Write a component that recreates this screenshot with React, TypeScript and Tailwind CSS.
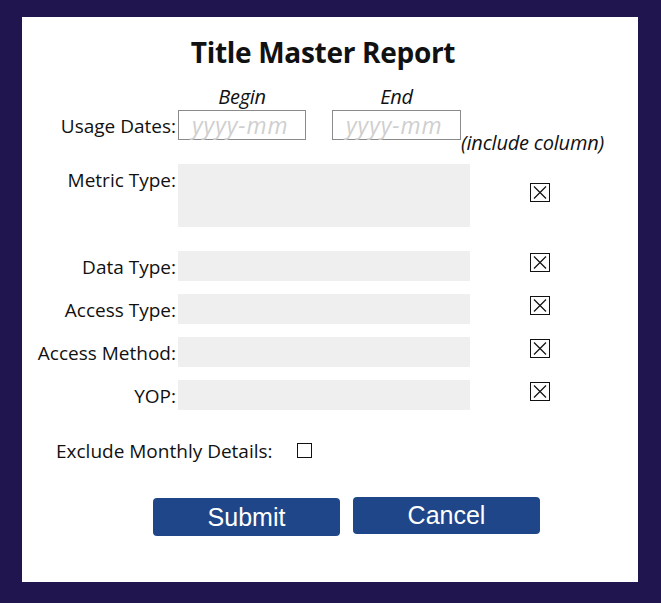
import { ReactNode } from "react";

const font = { fontFamily: '"Open Sans", "Noto Sans", sans-serif' };

function XBox() {
  return (
    <svg width="20" height="19" viewBox="0 0 20 19" className="block">
      <rect x="0.5" y="0.5" width="19" height="18" fill="white" stroke="#111" strokeWidth="1" />
      <path d="M4 3.5 L16 15.5 M16 3.5 L4 15.5" stroke="#111" strokeWidth="1.2" />
    </svg>
  );
}

function Row({ label, tall, children }: { label: string; tall?: boolean; children?: ReactNode }) {
  return (
    <div className={`flex ${tall ? "items-start" : "items-center"}`}>
      <div className={`w-[154px] text-right text-[19px] leading-[26px] text-[#111] ${tall ? "mt-[3px]" : "mt-[1px]"}`}>
        {label}
      </div>
      <div className={`ml-[2px] w-[292px] bg-[#efefef] ${tall ? "h-[63px]" : "h-[30px]"}`} />
      <div className={`ml-[60px] ${tall ? "mt-[19px]" : "-mt-[7px]"}`}>{children ?? <XBox />}</div>
    </div>
  );
}

function DateBox({ className }: { className: string }) {
  return (
    <div className={`${className} h-[30px] border border-[#8a8a8a] pl-[13px] text-[23px] tracking-[1px] leading-[28px] italic text-[#cfcfcf] whitespace-nowrap`}>
      yyyy-mm
    </div>
  );
}

export default function App() {
  return (
    <div className="w-[661px] h-[603px] bg-[#21154f] pt-[17px] pl-[22px]" style={font}>
      <div className="w-[616px] h-[565px] bg-white pt-[18px] text-[#111]">
        <h1 className="text-center text-[28px] leading-[34px] font-bold tracking-[-0.3px] pr-[14px]">
          Title Master Report
        </h1>

        <div className="mt-[19px] flex text-[20px] italic tracking-[-0.3px] leading-[18px]">
          <div className="w-[156px]" />
          <div className="w-[128px] text-center">Begin</div>
          <div className="w-[26px]" />
          <div className="w-[129px] text-center">End</div>
        </div>

        <div className="mt-[4px] flex items-start">
          <div className="w-[154px] text-right text-[19px] leading-[26px] mt-[3px]">Usage Dates:</div>
          <DateBox className="ml-[2px] w-[128px]" />
          <DateBox className="ml-[26px] w-[129px]" />
          <div className="mt-[22px] text-[20px] italic tracking-[-0.2px] leading-[22px] whitespace-nowrap">(include column)</div>
        </div>

        <div className="mt-[10px] flex flex-col gap-[13px]">
          <div className="mb-[11px]">
            <Row label="Metric Type:" tall />
          </div>
          <Row label="Data Type:" />
          <Row label="Access Type:" />
          <Row label="Access Method:" />
          <Row label="YOP:" />
        </div>

        <div className="mt-[28px] flex items-center pl-[34px]">
          <span className="text-[19px] leading-[26px]">Exclude Monthly Details:</span>
          <span className="ml-[24px] inline-block w-[15px] h-[15px] border border-[#111] -mt-[1px]" />
        </div>

        <div className="mt-[33px] flex items-start pl-[131px] gap-[13px]" style={{ fontFamily: '"Liberation Sans", Arial, sans-serif' }}>
          <button className="mt-[1px] w-[187px] h-[38px] rounded-[4px] bg-[#1f4688] text-white text-[25px] leading-[38px]">
            Submit
          </button>
          <button className="w-[187px] h-[37px] rounded-[4px] bg-[#1f4688] text-white text-[25px] leading-[37px]">
            Cancel
          </button>
        </div>
      </div>
    </div>
  );
}
